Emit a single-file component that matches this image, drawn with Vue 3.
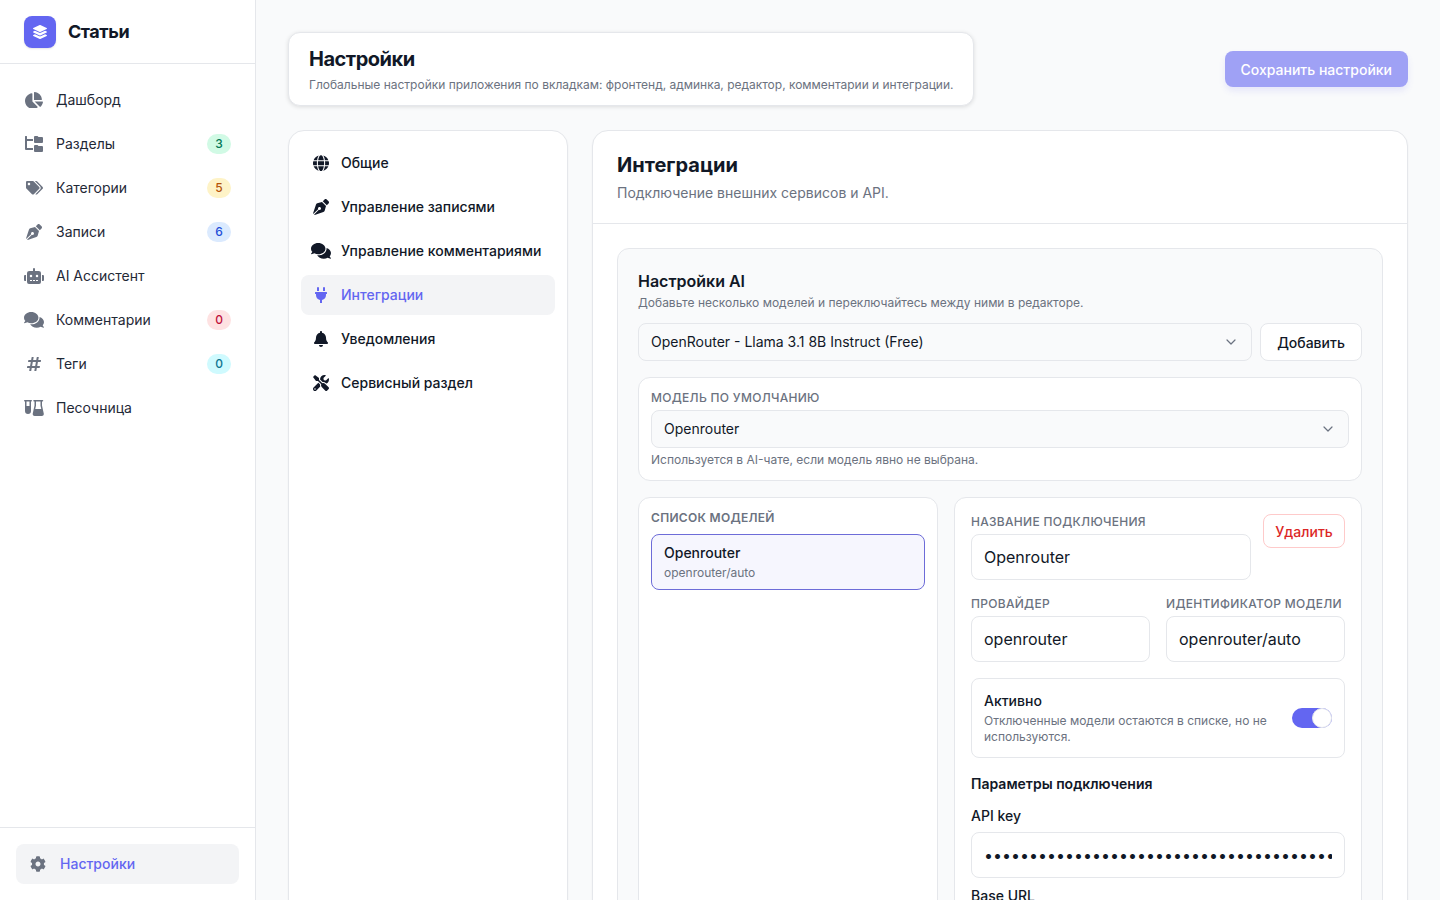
<template>
  <div class="app">
    <aside class="sidebar">
      <div class="brand">
        <span class="brand-logo">
          <svg viewBox="0 0 512 512" class="brand-icon"><path :d="icons.layers.d" /></svg>
        </span>
        <span class="brand-name">Статьи</span>
      </div>
      <nav class="side-nav">
        <a v-for="item in navItems" :key="item.label" class="side-link">
          <span class="side-icon">
            <svg :viewBox="icons[item.icon].box" :style="{ width: item.size + 'px' }"><path :d="icons[item.icon].d" /></svg>
          </span>
          <span class="side-label">{{ item.label }}</span>
          <span v-if="item.badge !== undefined" class="badge" :class="item.tone">{{ item.badge }}</span>
        </a>
      </nav>
      <div class="side-foot">
        <a class="foot-link">
          <svg viewBox="0 0 512 512" class="foot-icon"><path :d="icons.cog.d" /></svg>
          <span>Настройки</span>
        </a>
      </div>
    </aside>

    <main class="main">
      <header class="page-head">
        <div class="head-card">
          <h1>Настройки</h1>
          <p>Глобальные настройки приложения по вкладкам: фронтенд, админка, редактор, комментарии и интеграции.</p>
        </div>
        <button class="save-btn">Сохранить настройки</button>
      </header>

      <div class="columns">
        <div class="tabs">
          <a v-for="tab in tabs" :key="tab.label" class="tab" :class="{ active: tab.active }">
            <span class="tab-icon">
              <svg :viewBox="icons[tab.icon].box" :style="{ width: tab.size + 'px' }"><path :d="icons[tab.icon].d" /></svg>
            </span>
            {{ tab.label }}
          </a>
        </div>

        <section class="panel">
          <div class="panel-head">
            <h2>Интеграции</h2>
            <p>Подключение внешних сервисов и API.</p>
          </div>
          <div class="panel-body">
            <div class="ai-card">
              <h3>Настройки AI</h3>
              <p class="hint ai-sub">Добавьте несколько моделей и переключайтесь между ними в редакторе.</p>

              <div class="picker">
                <div class="select">
                  <span>OpenRouter - Llama 3.1 8B Instruct (Free)</span>
                  <svg viewBox="0 0 20 20" class="chevron"><path d="M5 7.5l5 5 5-5" /></svg>
                </div>
                <button class="add-btn">Добавить</button>
              </div>

              <div class="box default-box">
                <div class="label">Модель по умолчанию</div>
                <div class="select">
                  <span>Openrouter</span>
                  <svg viewBox="0 0 20 20" class="chevron"><path d="M5 7.5l5 5 5-5" /></svg>
                </div>
                <p class="hint default-hint">Используется в AI-чате, если модель явно не выбрана.</p>
              </div>

              <div class="split">
                <div class="box models">
                  <div class="label">Список моделей</div>
                  <div class="model-item">
                    <div class="model-name">Openrouter</div>
                    <div class="model-id">openrouter/auto</div>
                  </div>
                </div>

                <div class="box editor">
                  <div class="name-row">
                    <div class="field">
                      <div class="label">Название подключения</div>
                      <div class="input">Openrouter</div>
                    </div>
                    <button class="del-btn">Удалить</button>
                  </div>

                  <div class="two-col">
                    <div class="field">
                      <div class="label">Провайдер</div>
                      <div class="input">openrouter</div>
                    </div>
                    <div class="field">
                      <div class="label">Идентификатор модели</div>
                      <div class="input">openrouter/auto</div>
                    </div>
                  </div>

                  <div class="active-row">
                    <div class="active-text">
                      <div class="active-title">Активно</div>
                      <p class="hint">Отключенные модели остаются в списке, но не используются.</p>
                    </div>
                    <span class="toggle"><span class="knob"></span></span>
                  </div>

                  <div class="params-title">Параметры подключения</div>
                  <div class="plain-label">API key</div>
                  <div class="input secret"><div class="secret-value">{{ apiKeyDots }}</div></div>
                  <div class="plain-label base-label">Base URL</div>
                </div>
              </div>
            </div>
          </div>
        </section>
      </div>
    </main>
  </div>
</template>

<script setup>
const icons = {
  layers: { box: '0 0 512 512', d: 'M12.41 148.02l232.94 105.67c6.8 3.09 14.49 3.09 21.29 0l232.94-105.67c16.55-7.51 16.55-32.52 0-40.03L266.65 2.31a25.607 25.607 0 0 0-21.29 0L12.41 107.98c-16.55 7.51-16.55 32.53 0 40.04zm487.18 88.28l-58.09-26.33-161.64 73.27c-7.56 3.43-15.59 5.17-23.86 5.17s-16.29-1.74-23.86-5.17L70.51 209.97l-58.1 26.33c-16.55 7.5-16.55 32.5 0 40l232.94 105.59c6.8 3.08 14.49 3.08 21.29 0L499.59 276.3c16.55-7.5 16.55-32.5 0-40zm0 127.8l-57.87-26.23-161.86 73.37c-7.56 3.43-15.59 5.17-23.86 5.17s-16.29-1.74-23.86-5.17L70.29 337.87 12.41 364.1c-16.55 7.5-16.55 32.5 0 40l232.94 105.59c6.8 3.08 14.49 3.08 21.29 0L499.59 404.1c16.55-7.5 16.55-32.5 0-40z' },
  pie: { box: '0 0 544 512', d: 'M527.79 288H290.5l158.03 158.03c6.04 6.04 15.98 6.53 22.19.68 38.7-36.46 65.32-85.61 73.13-140.86 1.34-9.46-6.51-17.85-16.06-17.85zm-15.83-64.8C503.72 103.74 408.26 8.28 288.8.04 279.68-.59 272 7.1 272 16.24V240h223.77c9.14 0 16.82-7.68 16.19-16.8zM224 288V50.71c0-9.55-8.39-17.4-17.84-16.06C86.99 51.49-4.1 155.6.14 280.37 4.5 408.51 114.83 513.59 243.03 511.98c50.4-.63 96.97-16.87 135.26-44.03 7.9-5.6 8.42-17.23 1.57-24.08L224 288z' },
  tree: { box: '0 0 576 512', d: 'M544 32H432L400 0h-80a32 32 0 0 0-32 32v160a32 32 0 0 0 32 32h224a32 32 0 0 0 32-32V64a32 32 0 0 0-32-32zm0 288H432l-32-32h-80a32 32 0 0 0-32 32v160a32 32 0 0 0 32 32h224a32 32 0 0 0 32-32V352a32 32 0 0 0-32-32zM64 16A16 16 0 0 0 48 0H16A16 16 0 0 0 0 16v400a32 32 0 0 0 32 32h224v-64H64V160h192V96H64z' },
  tags: { box: '0 0 640 512', d: 'M497.941 225.941L286.059 14.059A48 48 0 0 0 252.118 0H48C21.49 0 0 21.49 0 48v204.118a48 48 0 0 0 14.059 33.941l211.882 211.882c18.744 18.745 49.136 18.746 67.882 0l204.118-204.118c18.745-18.745 18.745-49.137 0-67.882zM112 160c-26.51 0-48-21.49-48-48s21.49-48 48-48 48 21.49 48 48-21.49 48-48 48zm513.941 133.823L421.823 497.941c-18.745 18.745-49.137 18.745-67.882 0l-.36-.36L527.64 323.522c16.999-16.999 26.36-39.6 26.36-63.64s-9.362-46.641-26.36-63.64L331.397 0h48.721a48 48 0 0 1 33.941 14.059l211.882 211.882c18.745 18.745 18.745 49.137 0 67.882z' },
  pen: { box: '0 0 512 512', d: 'M136.6 138.79a64.003 64.003 0 0 0-43.31 41.35L0 460l14.69 14.69L164.8 324.58c-2.99-6.26-4.8-13.18-4.8-20.58 0-26.51 21.49-48 48-48s48 21.49 48 48-21.49 48-48 48c-7.4 0-14.32-1.81-20.58-4.8L37.31 497.31 52 512l279.86-93.29a64.003 64.003 0 0 0 41.35-43.31L416 224 288 96l-151.4 42.79zm361.34-64.62l-60.11-60.11c-18.75-18.75-49.16-18.75-67.91 0l-56.55 56.55 128.02 128.02 56.55-56.55c18.75-18.75 18.75-49.15 0-67.91z' },
  robot: { box: '0 0 640 512', d: 'M32,224H64V416H32A31.96166,31.96166,0,0,1,0,384V256A31.96166,31.96166,0,0,1,32,224Zm512-48V448a64.06328,64.06328,0,0,1-64,64H160a64.06328,64.06328,0,0,1-64-64V176a79.974,79.974,0,0,1,80-80H288V32a32,32,0,0,1,64,0V96H464A79.974,79.974,0,0,1,544,176ZM264,256a40,40,0,1,0-40,40A39.997,39.997,0,0,0,264,256Zm-8,128H192v32h64Zm96,0H288v32h64ZM456,256a40,40,0,1,0-40,40A39.997,39.997,0,0,0,456,256Zm-8,128H384v32h64ZM640,256V384a31.96166,31.96166,0,0,1-32,32H576V224h32A31.96166,31.96166,0,0,1,640,256Z' },
  comments: { box: '0 0 576 512', d: 'M416 192c0-88.4-93.1-160-208-160S0 103.6 0 192c0 34.3 14.1 65.9 38 92-13.4 30.2-35.5 54.2-35.8 54.5-2.2 2.3-2.8 5.7-1.5 8.7S4.8 352 8 352c36.6 0 66.9-12.3 88.7-25 32.2 15.7 70.3 25 111.3 25 114.9 0 208-71.6 208-160zm122 220c23.9-26 38-57.7 38-92 0-66.9-53.5-124.2-129.3-148.1.9 6.6 1.3 13.3 1.3 20.1 0 105.9-107.7 192-240 192-10.8 0-21.3-.8-31.7-1.9C207.8 439.6 281.8 480 368 480c41 0 79.1-9.2 111.3-25 21.8 12.7 52.1 25 88.7 25 3.2 0 6.1-1.9 7.3-4.8 1.3-2.9.7-6.3-1.5-8.7-.3-.3-22.4-24.2-35.8-54.5z' },
  hash: { box: '0 0 448 512', d: 'M440.667 182.109l7.143-40c1.313-7.355-4.342-14.109-11.813-14.109h-74.81l14.623-81.891C377.123 38.754 371.468 32 363.997 32h-40.632a12 12 0 0 0-11.813 9.891L296.175 128H197.54l14.623-81.891C213.477 38.754 207.822 32 200.35 32h-40.632a12 12 0 0 0-11.813 9.891L132.528 128H53.432a12 12 0 0 0-11.813 9.891l-7.143 40C33.163 185.246 38.818 192 46.289 192h74.81L98.242 320H19.146a12 12 0 0 0-11.813 9.891l-7.143 40C-1.123 377.246 4.532 384 12.003 384h74.81L72.19 465.891C70.877 473.246 76.532 480 84.003 480h40.632a12 12 0 0 0 11.813-9.891L151.826 384h98.634l-14.623 81.891C234.523 473.246 240.178 480 247.65 480h40.632a12 12 0 0 0 11.813-9.891L315.472 384h79.096a12 12 0 0 0 11.813-9.891l7.143-40c1.313-7.355-4.342-14.109-11.813-14.109h-74.81l22.857-128h79.096a12 12 0 0 0 11.813-9.891zM261.889 320h-98.634l22.857-128h98.634l-22.857 128z' },
  // test tube + flask, drawn by hand
  flask: { box: '0 0 640 512', d: 'M24 0H232a24 24 0 0 1 0 48H224V352A96 96 0 0 1 32 352V48H24a24 24 0 0 1 0-48Z M80 48V192H176V48Z M320 0H592a24 24 0 0 1 0 48H576V176L632 432C642 476 612 512 572 512H340C300 512 270 476 280 432L336 176V48H320a24 24 0 0 1 0-48Z M384 48V184L360 288H552L528 184V48Z' },
  globe: { box: '0 0 496 512', d: 'M336.5 160C322 70.7 287.8 8 248 8s-74 62.7-88.5 152h177zM152 256c0 22.2 1.2 43.5 3.3 64h185.3c2.1-20.5 3.3-41.8 3.3-64s-1.2-43.5-3.3-64H155.3c-2.1 20.5-3.3 41.8-3.3 64zm324.7-96c-28.6-67.9-86.5-120.4-158-141.6 24.4 33.8 41.2 84.7 50 141.6h108zM177.2 18.4C105.8 39.6 47.8 92.1 19.3 160h108c8.7-56.9 25.5-107.8 49.9-141.6zM487.4 192H372.7c2.1 21 3.3 42.5 3.3 64s-1.2 43-3.3 64h114.6c5.5-20.5 8.6-41.8 8.6-64s-3.1-43.5-8.5-64zM120 256c0-21.5 1.2-43 3.3-64H8.6C3.2 212.5 0 233.8 0 256s3.2 43.5 8.6 64h114.6c-2-21-3.2-42.5-3.2-64zm39.5 96c14.5 89.3 48.7 152 88.5 152s74-62.7 88.5-152h-177zm159.3 141.6c71.4-21.2 129.4-73.7 158-141.6h-108c-8.8 56.9-25.6 107.8-50 141.6zM19.3 352c28.6 67.9 86.5 120.4 158 141.6-24.4-33.8-41.2-84.7-50-141.6h-108z' },
  plug: { box: '0 0 384 512', d: 'M320,32a32,32,0,0,0-64,0v96h64Zm48,128H16A16,16,0,0,0,0,176v32a16,16,0,0,0,16,16H32v32A160.07,160.07,0,0,0,160,412.8V512h64V412.8A160.07,160.07,0,0,0,352,256V224h16a16,16,0,0,0,16-16V176A16,16,0,0,0,368,160ZM128,32a32,32,0,0,0-64,0v96h64Z' },
  bell: { box: '0 0 448 512', d: 'M224 512c35.32 0 63.97-28.65 63.97-64H160.03c0 35.35 28.65 64 63.97 64zm215.39-149.71c-19.32-20.76-55.47-51.99-55.47-154.29 0-77.7-54.48-139.9-127.94-155.16V32c0-17.67-14.32-32-31.98-32s-31.98 14.33-31.98 32v20.84C118.56 68.1 64.08 130.3 64.08 208c0 102.3-36.15 133.53-55.47 154.29-6 6.45-8.66 14.16-8.61 21.71.11 16.4 12.98 32 32.1 32h383.8c19.12 0 32-15.6 32.1-32 .05-7.55-2.61-15.27-8.61-21.71z' },
  tools: { box: '0 0 512 512', d: 'M501.1 395.7L384 278.6c-23.1-23.1-57.6-27.6-85.4-13.9L192 158.1V96L64 0 0 64l96 128h62.1l106.6 106.6c-13.6 27.8-9.2 62.3 13.9 85.4l117.1 117.1c14.6 14.6 38.2 14.6 52.7 0l52.7-52.7c14.5-14.6 14.5-38.2 0-52.7zM331.7 225c28.3 0 54.9 11 74.9 31l19.4 19.4c15.8-6.9 30.8-16.5 43.8-29.5 37.1-37.1 49.7-89.3 37.9-136.7-2.2-9-13.5-12.1-20.1-5.5l-74.4 74.4-67.9-11.3L334 98.9l74.4-74.4c6.6-6.6 3.4-17.9-5.7-20.2-47.4-11.7-99.6.9-136.6 37.9-28.5 28.5-41.9 66.1-41.2 103.6l82.1 82.1c8.1-1.9 16.5-2.9 24.7-2.9zm-103.9 82l-56.7-56.7L18.7 402.8c-25 25-25 65.5 0 90.5s65.5 25 90.5 0l123.6-123.6c-7.6-19.9-9.9-41.6-5-62.7zM64 472c-13.2 0-24-10.8-24-24 0-13.3 10.7-24 24-24s24 10.7 24 24c0 13.2-10.7 24-24 24z' },
  cog: { box: '0 0 512 512', d: 'M487.4 315.7l-42.6-24.6c4.3-23.2 4.3-47 0-70.2l42.6-24.6c4.9-2.8 7.1-8.6 5.5-14-11.1-35.6-30-67.8-54.7-94.6-3.8-4.1-10-5.1-14.8-2.3L380.8 110c-17.9-15.4-38.5-27.3-60.8-35.1V25.8c0-5.6-3.9-10.5-9.4-11.7-36.7-8.2-74.3-7.8-109.2 0-5.5 1.2-9.4 6.1-9.4 11.7V75c-22.2 7.9-42.8 19.8-60.8 35.1L88.7 85.5c-4.9-2.8-11-1.9-14.8 2.3-24.7 26.7-43.6 58.9-54.7 94.6-1.7 5.4.6 11.2 5.5 14L67.3 221c-4.3 23.2-4.3 47 0 70.2l-42.6 24.6c-4.9 2.8-7.1 8.6-5.5 14 11.1 35.6 30 67.8 54.7 94.6 3.8 4.1 10 5.1 14.8 2.3l42.6-24.6c17.9 15.4 38.5 27.3 60.8 35.1v49.2c0 5.6 3.9 10.5 9.4 11.7 36.7 8.2 74.3 7.8 109.2 0 5.5-1.2 9.4-6.1 9.4-11.7v-49.2c22.2-7.9 42.8-19.8 60.8-35.1l42.6 24.6c4.9 2.8 11 1.9 14.8-2.3 24.7-26.7 43.6-58.9 54.7-94.6 1.5-5.5-.7-11.3-5.6-14.1zM256 336c-44.1 0-80-35.9-80-80s35.9-80 80-80 80 35.9 80 80-35.9 80-80 80z' }
}

const navItems = [
  { label: 'Дашборд', icon: 'pie', size: 18 },
  { label: 'Разделы', icon: 'tree', size: 18, badge: 3, tone: 'green' },
  { label: 'Категории', icon: 'tags', size: 17, badge: 5, tone: 'amber' },
  { label: 'Записи', icon: 'pen', size: 16, badge: 6, tone: 'blue' },
  { label: 'AI Ассистент', icon: 'robot', size: 20 },
  { label: 'Комментарии', icon: 'comments', size: 20, badge: 0, tone: 'red' },
  { label: 'Теги', icon: 'hash', size: 14, badge: 0, tone: 'cyan' },
  { label: 'Песочница', icon: 'flask', size: 20 }
]

const tabs = [
  { label: 'Общие', icon: 'globe', size: 16 },
  { label: 'Управление записями', icon: 'pen', size: 16 },
  { label: 'Управление комментариями', icon: 'comments', size: 20 },
  { label: 'Интеграции', icon: 'plug', size: 12, active: true },
  { label: 'Уведомления', icon: 'bell', size: 14 },
  { label: 'Сервисный раздел', icon: 'tools', size: 16 }
]

const apiKeyDots = '•'.repeat(40)
</script>

<style>
html,
body {
  margin: 0;
  height: 100%;
  overflow: hidden;
}
</style>

<style scoped>
.app {
  display: flex;
  height: 100vh;
  overflow: hidden;
  background: #f9fafb;
  color: #111827;
  font-family: Inter, "Noto Sans", sans-serif;
  font-size: 14px;
  line-height: 20px;
}

svg {
  display: block;
  flex-shrink: 0;
  fill: currentColor;
}

h1,
h2,
h3,
p {
  margin: 0;
}

button {
  font-family: inherit;
  cursor: pointer;
}

/* sidebar */
.sidebar {
  flex: 0 0 256px;
  box-sizing: border-box;
  display: flex;
  flex-direction: column;
  background: #fff;
  border-right: 1px solid #e5e7eb;
}

.brand {
  display: flex;
  align-items: center;
  gap: 12px;
  height: 64px;
  box-sizing: border-box;
  padding: 0 24px;
  border-bottom: 1px solid #e5e7eb;
}

.brand-logo {
  display: flex;
  align-items: center;
  justify-content: center;
  width: 32px;
  height: 32px;
  border-radius: 8px;
  background: #6366f1;
  color: #fff;
  box-shadow: 0 1px 2px rgba(0, 0, 0, 0.1);
}

.brand-icon {
  width: 14px;
  height: 14px;
}

.brand-name {
  font-size: 18px;
  font-weight: 700;
  letter-spacing: -0.45px;
}

.side-nav {
  flex: 1;
  padding: 16px;
  display: flex;
  flex-direction: column;
  gap: 4px;
}

.side-link {
  display: flex;
  align-items: center;
  height: 40px;
  padding: 0 8px;
  color: #1f2937;
}

.side-icon {
  display: flex;
  justify-content: center;
  width: 20px;
  margin-right: 12px;
  color: #6b7280;
}

.side-label {
  flex: 1;
}

.badge {
  min-width: 24px;
  height: 20px;
  box-sizing: border-box;
  padding: 0 8px;
  border-radius: 10px;
  font-size: 12px;
  line-height: 20px;
  font-weight: 500;
  text-align: center;
}

.green { background: #d1fae5; color: #047857; }
.amber { background: #fef3c7; color: #b45309; }
.blue { background: #dbeafe; color: #1d4ed8; }
.red { background: #fee2e2; color: #be123c; }
.cyan { background: #cffafe; color: #0e7490; }

.side-foot {
  border-top: 1px solid #e5e7eb;
  padding: 16px;
  height: 73px;
  box-sizing: border-box;
}

.foot-link {
  display: flex;
  align-items: center;
  gap: 14px;
  height: 40px;
  padding: 0 14px;
  border-radius: 8px;
  background: #f3f4f6;
  color: #6366f1;
  font-weight: 500;
}

.foot-icon {
  width: 16px;
  height: 16px;
  color: #6b7280;
}

/* main */
.main {
  flex: 1;
  min-width: 0;
  padding: 32px;
  box-sizing: border-box;
  display: flex;
  flex-direction: column;
  gap: 24px;
  overflow: hidden;
}

.page-head {
  display: flex;
  align-items: center;
  justify-content: space-between;
}

.head-card {
  padding: 14px 20px 12px;
  background: #fff;
  border: 1px solid #e5e7eb;
  border-radius: 12px;
  box-shadow: 0 1px 4px rgba(0, 0, 0, 0.12);
}

.head-card h1 {
  font-size: 20px;
  line-height: 24px;
  font-weight: 700;
  letter-spacing: -0.5px;
}

.head-card p {
  margin-top: 6px;
  font-size: 12px;
  line-height: 16px;
  letter-spacing: -0.01px;
  color: #6b7280;
}

.save-btn {
  height: 36px;
  padding: 0 16px;
  border: 0;
  border-radius: 8px;
  background: #9fa1f5;
  color: #fff;
  font-size: 14px;
  font-weight: 500;
  box-shadow: 0 4px 6px rgba(99, 102, 241, 0.12);
}

.columns {
  display: grid;
  grid-template-columns: 280px minmax(0, 1fr);
  gap: 24px;
  flex: 1;
  min-height: 1200px;
}

.tabs {
  display: flex;
  flex-direction: column;
  gap: 4px;
  padding: 12px;
  background: #fff;
  border: 1px solid #e5e7eb;
  border-radius: 16px;
  box-shadow: 0 1px 2px rgba(0, 0, 0, 0.05);
}

.tab {
  display: flex;
  align-items: center;
  height: 40px;
  padding: 0 12px;
  border-radius: 8px;
  font-weight: 500;
  color: #111827;
}

.tab-icon {
  display: flex;
  justify-content: center;
  flex: 0 0 16px;
  width: 16px;
  margin-right: 12px;
}

.tab.active {
  background: #f3f4f6;
  color: #6366f1;
}

.panel {
  min-width: 0;
  background: #fff;
  border: 1px solid #e5e7eb;
  border-radius: 16px;
  box-shadow: 0 1px 2px rgba(0, 0, 0, 0.05);
}

.panel-head {
  padding: 20px 24px;
  border-bottom: 1px solid #e5e7eb;
}

.panel-head h2 {
  font-size: 20px;
  line-height: 28px;
  font-weight: 700;
}

.panel-head p {
  margin-top: 4px;
  color: #6b7280;
}

.panel-body {
  padding: 24px;
}

.ai-card {
  padding: 20px;
  background: #f9fafb;
  border: 1px solid #e5e7eb;
  border-radius: 12px;
}

.ai-card h3 {
  font-size: 16px;
  line-height: 24px;
  font-weight: 600;
}

.hint {
  font-size: 12px;
  line-height: 16px;
  color: #6b7280;
}

.ai-sub {
  margin-top: 2px;
}

.picker {
  display: flex;
  gap: 8px;
  margin-top: 12px;
}

.select {
  flex: 1;
  display: flex;
  align-items: center;
  justify-content: space-between;
  height: 38px;
  box-sizing: border-box;
  padding: 0 12px;
  background: #f9fafb;
  border: 1px solid #e5e7eb;
  border-radius: 8px;
}

.chevron {
  width: 16px;
  height: 16px;
  fill: none;
  stroke: #6b7280;
  stroke-width: 1.5;
  stroke-linecap: round;
  stroke-linejoin: round;
}

.add-btn {
  width: 102px;
  background: #fff;
  border: 1px solid #e5e7eb;
  border-radius: 8px;
  color: #111827;
  font-size: 14px;
  font-weight: 500;
}

.box {
  min-width: 0;
  background: #fff;
  border: 1px solid #e5e7eb;
  border-radius: 12px;
}

.label {
  font-size: 12px;
  line-height: 16px;
  font-weight: 500;
  letter-spacing: 0.3px;
  text-transform: uppercase;
  color: #6b7280;
  white-space: nowrap;
}

.default-box {
  margin-top: 16px;
  padding: 12px;
}

.default-box .select {
  margin-top: 4px;
}

.default-hint {
  margin-top: 4px;
}

.split {
  display: grid;
  grid-template-columns: 300px minmax(0, 1fr);
  gap: 16px;
  margin-top: 16px;
}

.models {
  padding: 12px;
}

.models .label {
  font-weight: 600;
}

.model-item {
  margin-top: 8px;
  height: 56px;
  box-sizing: border-box;
  padding: 8px 12px;
  background: #f6f6fe;
  border: 1px solid #6d6cd8;
  border-radius: 8px;
}

.model-name {
  font-weight: 500;
}

.model-id {
  font-size: 12px;
  line-height: 16px;
  margin-top: 2px;
  color: #6b7280;
}

.editor {
  padding: 16px;
}

.name-row {
  display: flex;
  align-items: flex-start;
  gap: 12px;
}

.field {
  min-width: 0;
}

.name-row .field {
  flex: 1;
}

.input {
  height: 46px;
  box-sizing: border-box;
  margin-top: 4px;
  padding: 0 12px;
  background: #fff;
  border: 1px solid #e5e7eb;
  border-radius: 8px;
  font-size: 16px;
  line-height: 44px;
  white-space: nowrap;
  overflow: hidden;
}

.del-btn {
  flex: 0 0 82px;
  height: 34px;
  background: #fff;
  border: 1px solid #fecaca;
  border-radius: 8px;
  color: #dc2626;
  font-size: 14px;
  font-weight: 500;
}

.two-col {
  display: grid;
  grid-template-columns: repeat(2, minmax(0, 1fr));
  gap: 16px;
  margin-top: 16px;
}

.active-row {
  display: flex;
  align-items: center;
  gap: 24px;
  margin-top: 16px;
  padding: 12px;
  border: 1px solid #e5e7eb;
  border-radius: 8px;
}

.active-text {
  flex: 1;
}

.active-text .hint {
  margin-top: 2px;
}

.active-title {
  font-weight: 500;
}

.toggle {
  position: relative;
  flex: 0 0 40px;
  height: 20px;
  border-radius: 10px;
  background: #6366f1;
}

.knob {
  position: absolute;
  top: 0;
  right: 0;
  width: 20px;
  height: 20px;
  box-sizing: border-box;
  border-radius: 50%;
  background: #fff;
  border: 1px solid #e5e7eb;
}

.params-title {
  margin-top: 16px;
  font-weight: 600;
}

.plain-label {
  margin-top: 12px;
  font-weight: 500;
}

.secret {
  margin-top: 6px;
}

.secret-value {
  overflow: hidden;
}

.base-label {
  margin-top: 8px;
}
</style>
